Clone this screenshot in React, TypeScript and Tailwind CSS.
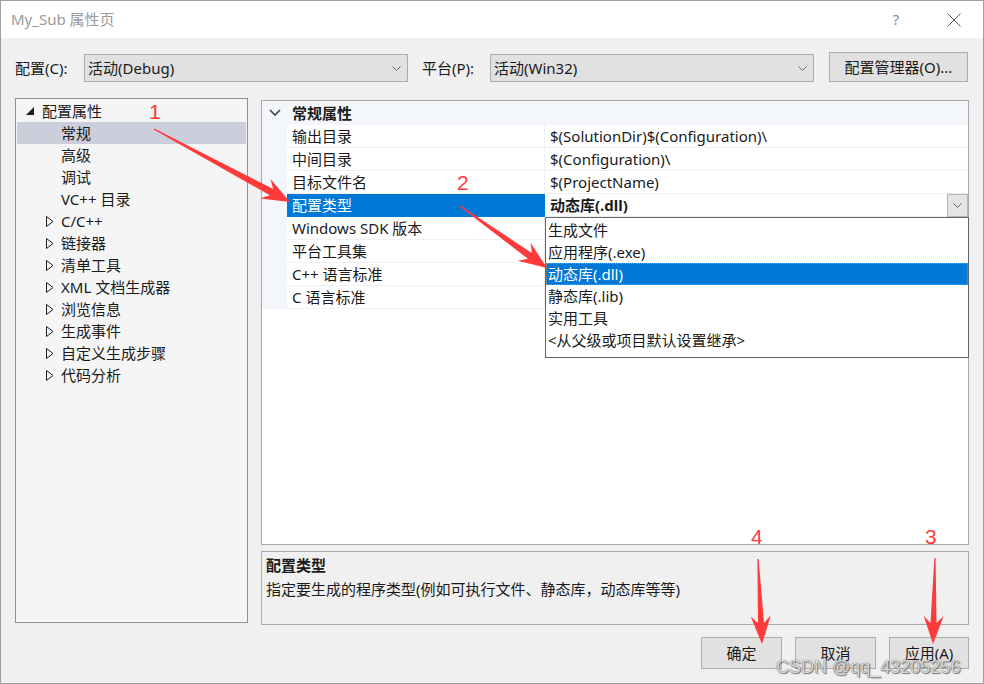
import React from "react";

function arrowPoints(x1: number, y1: number, x2: number, y2: number, headLen = 26, headW = 11, shaftW = 3.5) {
  const dx = x2 - x1;
  const dy = y2 - y1;
  const L = Math.hypot(dx, dy);
  const ux = dx / L;
  const uy = dy / L;
  const nx = -uy;
  const ny = ux;
  const bx = x2 - ux * headLen * 0.75;
  const by = y2 - uy * headLen * 0.75;
  const hx = x2 - ux * headLen;
  const hy = y2 - uy * headLen;
  const pts = [
    [x1 + nx * 0.6, y1 + ny * 0.6],
    [bx + nx * shaftW, by + ny * shaftW],
    [hx + nx * headW, hy + ny * headW],
    [x2, y2],
    [hx - nx * headW, hy - ny * headW],
    [bx - nx * shaftW, by - ny * shaftW],
    [x1 - nx * 0.6, y1 - ny * 0.6],
  ];
  return pts.map((p) => `${p[0].toFixed(1)},${p[1].toFixed(1)}`).join(" ");
}

const SmallChevron = () => (
  <svg width="9" height="5" viewBox="0 0 9 5">
    <polyline points="0.5,0.5 4.5,4.5 8.5,0.5" fill="none" stroke="#666" strokeWidth="1" />
  </svg>
);

const Expanded = () => (
  <svg width="8" height="8" viewBox="0 0 8 8">
    <polygon points="8,0 8,8 0,8" fill="#1e1e1e" />
  </svg>
);

const Collapsed = () => (
  <svg width="8" height="11" viewBox="0 0 8 11">
    <polygon points="0.5,0.5 7,5.5 0.5,10.5" fill="none" stroke="#1e1e1e" strokeWidth="1" />
  </svg>
);

type TreeItem = { label: string; level: 0 | 1; icon: "exp" | "col" | "none"; selected?: boolean };

const tree: TreeItem[] = [
  { label: "配置属性", level: 0, icon: "exp" },
  { label: "常规", level: 1, icon: "none", selected: true },
  { label: "高级", level: 1, icon: "none" },
  { label: "调试", level: 1, icon: "none" },
  { label: "VC++ 目录", level: 1, icon: "none" },
  { label: "C/C++", level: 1, icon: "col" },
  { label: "链接器", level: 1, icon: "col" },
  { label: "清单工具", level: 1, icon: "col" },
  { label: "XML 文档生成器", level: 1, icon: "col" },
  { label: "浏览信息", level: 1, icon: "col" },
  { label: "生成事件", level: 1, icon: "col" },
  { label: "自定义生成步骤", level: 1, icon: "col" },
  { label: "代码分析", level: 1, icon: "col" },
];

const props: { name: string; value: string; selected?: boolean }[] = [
  { name: "输出目录", value: "$(SolutionDir)$(Configuration)\\" },
  { name: "中间目录", value: "$(Configuration)\\" },
  { name: "目标文件名", value: "$(ProjectName)" },
  { name: "配置类型", value: "动态库(.dll)", selected: true },
  { name: "Windows SDK 版本", value: "" },
  { name: "平台工具集", value: "" },
  { name: "C++ 语言标准", value: "" },
  { name: "C 语言标准", value: "" },
];

const options = ["生成文件", "应用程序(.exe)", "动态库(.dll)", "静态库(.lib)", "实用工具", "<从父级或项目默认设置继承>"];

export default function App() {
  return (
    <div className="relative w-[984px] h-[684px] border border-[#a0a0a0] bg-[#f0f0f0] flex flex-col font-['Noto_Sans','Noto_Sans_CJK_SC',sans-serif] text-[15px] leading-none text-[#1a1a1a] overflow-hidden">
      {/* Title bar */}
      <div className="h-[37px] bg-white flex items-center shrink-0">
        <div className="pl-[10px] text-[#9a9a9a] text-[15px]">My_Sub 属性页</div>
        <div className="ml-auto flex items-center">
          <div className="text-[#8a8a8a] text-[15px] w-[20px] text-center">?</div>
          <div className="ml-[41px] mr-[22px] w-[14px] h-[14px]">
            <svg width="14" height="14" viewBox="0 0 14 14">
              <line x1="0.5" y1="0.5" x2="13.5" y2="13.5" stroke="#555" strokeWidth="1" />
              <line x1="13.5" y1="0.5" x2="0.5" y2="13.5" stroke="#555" strokeWidth="1" />
            </svg>
          </div>
        </div>
      </div>

      {/* Config row */}
      <div className="mt-[14px] h-[30px] flex items-end pl-[14px] shrink-0">
        <div className="w-[69px] h-[28px] flex items-center">配置(C):</div>
        <div className="w-[324px] h-[28px] bg-[#e1e1e1] border border-[#adadad] flex items-center pl-[3px] pr-[6px]">
          <span>活动(Debug)</span>
          <span className="ml-auto flex"><SmallChevron /></span>
        </div>
        <div className="ml-[14px] w-[68px] h-[28px] flex items-center">平台(P):</div>
        <div className="w-[324px] h-[28px] bg-[#e1e1e1] border border-[#adadad] flex items-center pl-[3px] pr-[6px]">
          <span>活动(Win32)</span>
          <span className="ml-auto flex"><SmallChevron /></span>
        </div>
        <div className="ml-[15px] w-[139px] h-[30px] bg-[#e1e1e1] border border-[#adadad] flex items-center justify-center">
          配置管理器(O)...
        </div>
      </div>

      {/* Main area */}
      <div className="mt-[16px] h-[527px] flex pl-[14px] shrink-0">
        {/* Tree */}
        <div className="w-[233px] h-[525px] border border-[#8f9097] bg-[#f5f5f5] pt-[1px] px-[1px]">
          {tree.map((t) => (
            <div
              key={t.label}
              className={`h-[22px] flex items-center ${t.selected ? "bg-[#cccedb]" : ""} ${t.level === 0 ? "pl-[9px]" : "pl-[29px]"}`}
            >
              <span className={`${t.level === 0 ? "w-[16px]" : "w-[15px]"} flex items-center`}>
                {t.icon === "exp" ? <Expanded /> : t.icon === "col" ? <Collapsed /> : null}
              </span>
              <span>{t.label}</span>
            </div>
          ))}
        </div>

        {/* Right column */}
        <div className="ml-[13px] w-[708px] flex flex-col">
          <div className="relative mt-[2px] h-[445px] border border-[#a9a9a9] bg-white">
            <div className="h-[24px] flex items-center bg-[#f3f6fb]">
              <span className="w-[25px] flex justify-center">
                <svg width="12" height="8" viewBox="0 0 12 8">
                  <polyline points="1,1 6,6 11,1" fill="none" stroke="#444" strokeWidth="1.6" />
                </svg>
              </span>
              <span className="pl-[5px] font-bold">常规属性</span>
            </div>
            {props.map((p) => (
              <div key={p.name} className="h-[23px] flex">
                <div className="w-[25px] bg-[#f3f6fb]" />
                <div
                  className={`w-[258px] flex items-center pl-[5px] border-b border-r ${
                    p.selected ? "bg-[#0078d7] text-white border-[#0078d7]" : "border-[#f0f0f0]"
                  }`}
                >
                  {p.name}
                </div>
                <div className="flex-1 flex items-center pl-[5px] border-b border-[#f0f0f0]">
                  <span className={p.selected ? "font-bold" : ""}>{p.value}</span>
                  {p.selected && (
                    <span className="ml-auto w-[21px] h-[23px] bg-[#e5e5e5] border border-[#b5b5b5] flex items-center justify-center">
                      <SmallChevron />
                    </span>
                  )}
                </div>
              </div>
            ))}

            {/* Dropdown list */}
            <div className="absolute left-[283px] top-[116px] w-[424px] h-[141px] bg-white border border-[#646464] pt-[1px]">
              {options.map((o, i) => (
                <div
                  key={o}
                  className={`h-[22px] flex items-center pl-[2px] ${
                    i === 2 ? "bg-[#0078d7] text-white outline-1 outline-dotted outline-[#d08a3a] -outline-offset-1" : ""
                  }`}
                >
                  {o}
                </div>
              ))}
            </div>
          </div>

          <div className="mt-[6px] h-[74px] border border-[#a9a9a9] bg-[#f0f0f0] px-[4px] pt-[5px]">
            <div className="font-bold h-[16px] flex items-center">配置类型</div>
            <div className="mt-[8px] h-[16px] flex items-center">指定要生成的程序类型(例如可执行文件、静态库，动态库等等)</div>
          </div>
        </div>
      </div>

      {/* Buttons */}
      <div className="mt-[12px] h-[32px] flex justify-end gap-[13px] pr-[14px] shrink-0">
        <div className="w-[81px] h-[32px] bg-[#e1e1e1] border border-[#adadad] flex items-center justify-center">确定</div>
        <div className="w-[81px] h-[32px] bg-[#e1e1e1] border border-[#adadad] flex items-center justify-center">取消</div>
        <div className="w-[80px] h-[32px] bg-[#e1e1e1] border border-[#adadad] flex items-center justify-center">应用(A)</div>
      </div>

      {/* Watermark */}
      <div className="absolute left-[775px] top-[657px] text-[18px] leading-none text-[#d8d8d8] font-['Liberation_Sans',sans-serif] [text-shadow:0_0_1px_#555,1px_1px_1px_#777] pointer-events-none">
        CSDN @qq_43205256
      </div>

      {/* Annotations */}
      <svg className="absolute left-0 top-0 pointer-events-none" width="984" height="684" viewBox="0 0 984 684">
        <g fill="#ff3a3a">
          <polygon points={arrowPoints(153, 128, 289, 201, 28, 11, 3.5)} />
          <polygon points={arrowPoints(459, 205, 546, 267, 28, 11, 3.5)} />
          <polygon points={arrowPoints(757, 558, 761, 643, 28, 10, 3)} />
          <polygon points={arrowPoints(934, 557, 932, 643, 28, 10, 3)} />
        </g>
        <g fill="#ff3a3a" fontFamily="Liberation Sans, sans-serif" fontSize="21">
          <text x="148" y="118">1</text>
          <text x="456" y="189">2</text>
          <text x="750" y="543">4</text>
          <text x="924" y="543">3</text>
        </g>
      </svg>
    </div>
  );
}
